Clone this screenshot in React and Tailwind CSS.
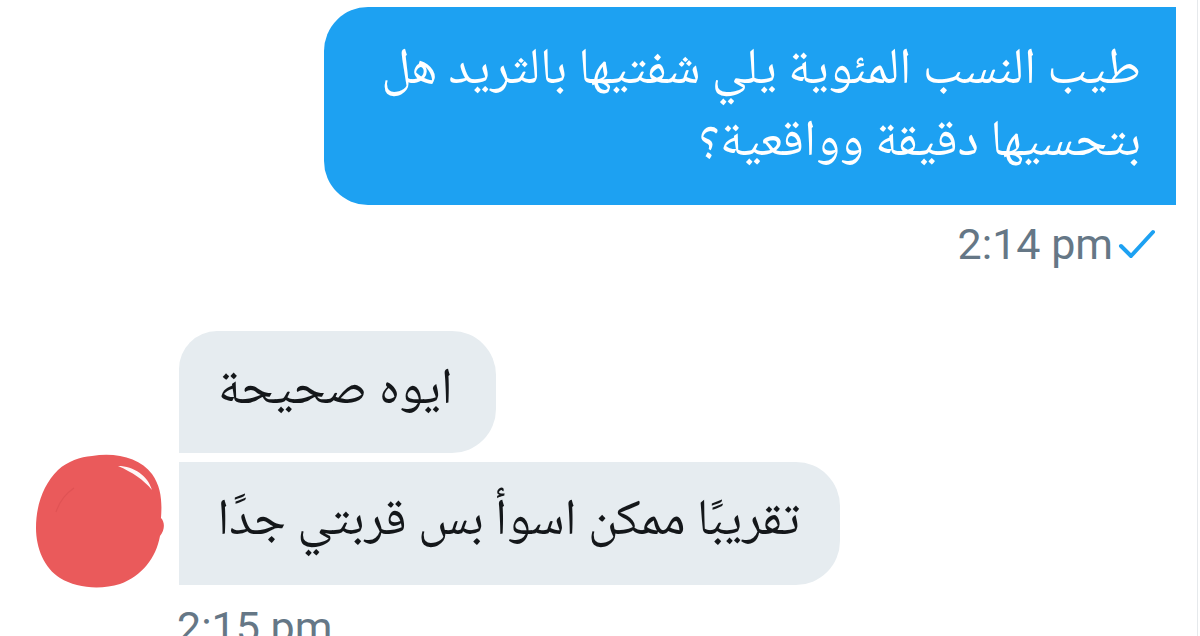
import React from "react";

const arabic = { fontFamily: '"Noto Naskh Arabic", "Noto Sans Arabic", "DejaVu Sans", sans-serif' };
const roboto = { fontFamily: 'Roboto, "Liberation Sans", sans-serif' };

function Avatar() {
  return (
    <svg width="132" height="138" viewBox="0 0 132 138">
      <path
        d="M58 4 C82 0 106 6 118 22 C128 36 128 52 127 66 C131 70 131 78 126 84 C122 106 108 124 86 132 C66 138 42 136 26 126 C10 116 2 96 2 76 C2 52 10 32 24 18 C34 9 46 5 58 4 Z"
        fill="#ea5a5b"
      />
      <path d="M84 14 C100 14 114 24 118 38 C110 28 98 20 84 14 Z" fill="#ffffff" opacity="0.95" />
      <path d="M22 60 C26 48 34 40 40 36" stroke="#d84f50" strokeWidth="1.2" fill="none" opacity="0.6" />
    </svg>
  );
}

export default function App() {
  return (
    <div className="w-[1200px] h-[636px] bg-white overflow-hidden pr-[2px]">
      <div className="h-full border-r border-[#e6e9ec] flex flex-col pt-[7px]">
        {/* sent message */}
        <div className="shrink-0 self-end mr-[21px] w-[852px] h-[198px] bg-[#1da1f2] rounded-l-[44px] flex flex-col justify-center pr-[35px] pt-[4px]" dir="rtl">
          <p className="text-white text-[51px] leading-[72px] whitespace-nowrap" style={arabic}>
            طيب النسب المئوية يلي شفتيها بالثريد هل
            <br />
            بتحسيها دقيقة وواقعية؟
          </p>
        </div>
        <div className="shrink-0 self-end mr-[41px] mt-[15px] flex items-center gap-[5px] h-[48px]">
          <span className="text-[43px] leading-[48px] text-[#657786]" style={roboto}>2:14 pm</span>
          <svg width="38" height="34" viewBox="0 0 38 34">
            <path d="M3 19 L13 29 L35 5" stroke="#1da1f2" strokeWidth="4" fill="none" strokeLinecap="round" strokeLinejoin="round" />
          </svg>
        </div>

        {/* received messages */}
        <div className="shrink-0 flex items-end mt-[63px] pl-[34px]">
          <div className="shrink-0 w-[132px] mr-[13px] mb-[-5px]">
            <Avatar />
          </div>
          <div className="flex flex-col gap-[9px]">
            <div className="w-[317px] h-[122px] bg-[#e6ecf0] rounded-tl-[38px] rounded-r-[44px] flex items-center justify-start pr-[43px]" dir="rtl">
              <span className="text-[#14171a] text-[51px] whitespace-nowrap" style={arabic}>ايوه صحيحة</span>
            </div>
            <div className="w-[661px] h-[123px] bg-[#e6ecf0] rounded-r-[44px] flex items-center justify-start pr-[40px]" dir="rtl">
              <span className="text-[#14171a] text-[51px] whitespace-nowrap" style={arabic}>تقريبًا ممكن اسوأ بس قربتي جدًا</span>
            </div>
          </div>
        </div>
        <div className="shrink-0 pl-[177px] mt-[18px]">
          <span className="text-[43px] leading-[48px] text-[#657786]" style={roboto}>2:15 pm</span>
        </div>
      </div>
    </div>
  );
}
